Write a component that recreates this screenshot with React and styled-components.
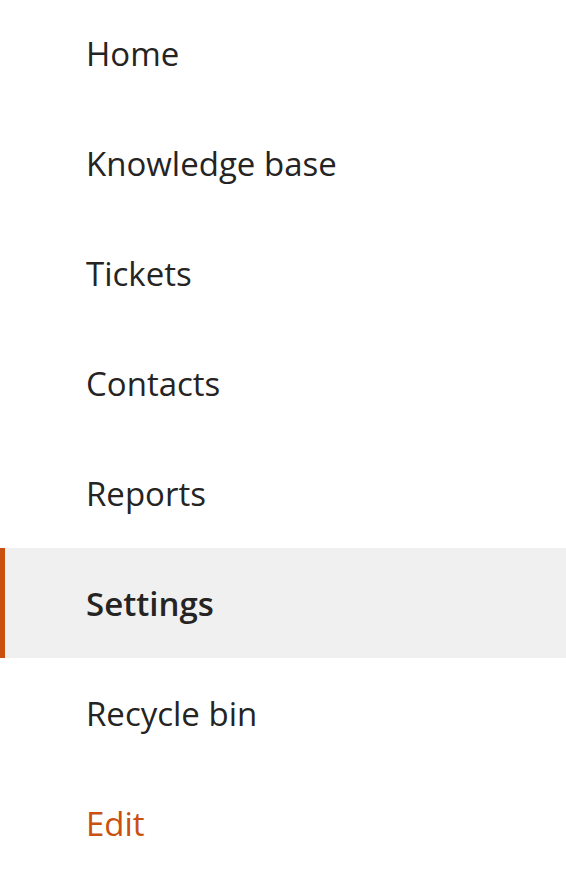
import React from "react";
import styled, { createGlobalStyle } from "styled-components";

const GlobalStyle = createGlobalStyle`
  html, body {
    margin: 0;
    padding: 0;
    background: #fff;
  }
  body {
    font-family: "Open Sans", "Noto Sans", sans-serif;
  }
`;

const items = [
  { label: "Home" },
  { label: "Knowledge base" },
  { label: "Tickets" },
  { label: "Contacts" },
  { label: "Reports" },
  { label: "Settings", active: true },
  { label: "Recycle bin" },
  { label: "Edit", link: true },
];

const App = () => {
  return (
    <>
      <GlobalStyle />
      <Nav>
        {items.map((item) => (
          <NavItem key={item.label} $active={item.active} $link={item.link}>
            {item.label}
          </NavItem>
        ))}
      </Nav>
    </>
  );
};

const Nav = styled.nav`
  display: flex;
  flex-direction: column;
  width: 566px;
  margin-top: -2px;
`;

const NavItem = styled.div`
  display: flex;
  align-items: center;
  height: 110px;
  box-sizing: border-box;
  font-size: 33px;
  font-weight: ${(p) => (p.$active ? 600 : 400)};
  color: ${(p) => (p.$link ? "#ca5010" : "#252423")};
  background: ${(p) => (p.$active ? "#f0f0f0" : "transparent")};
  border-left: ${(p) => (p.$active ? "5px solid #ca5010" : "none")};
  padding-left: ${(p) => (p.$active ? "81px" : "86px")};
  cursor: pointer;
`;

export default App;
